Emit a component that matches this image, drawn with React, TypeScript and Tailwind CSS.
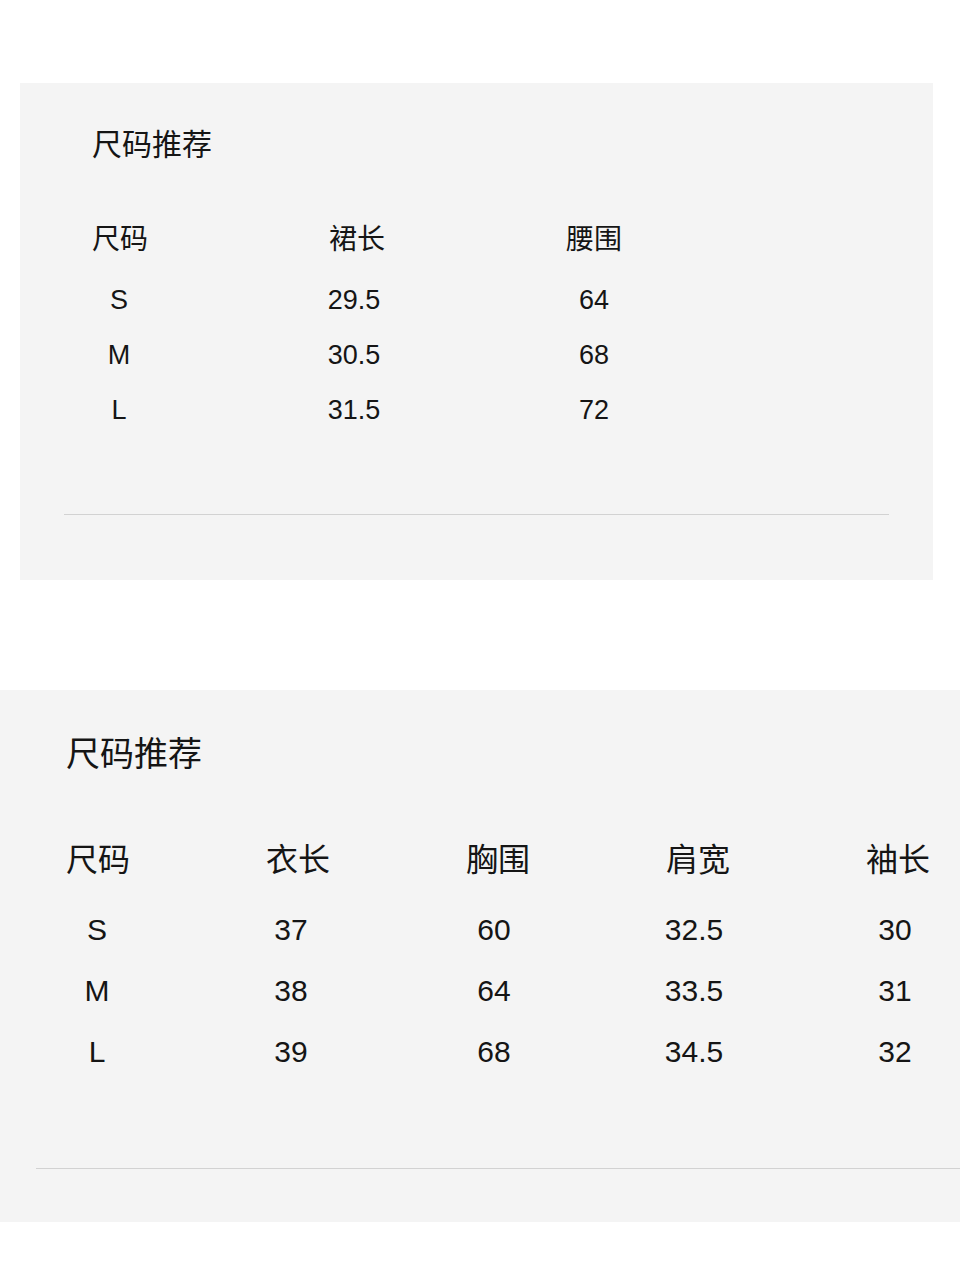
const font = { fontFamily: '"Liberation Sans", "Noto Sans CJK SC", sans-serif' };

const skirtRows = [
    ['S', '29.5', '64'],
    ['M', '30.5', '68'],
    ['L', '31.5', '72'],
];

const topRows = [
    ['S', '37', '60', '32.5', '30'],
    ['M', '38', '64', '33.5', '31'],
    ['L', '39', '68', '34.5', '32'],
];

// value cells sit a little off the header centres
const topValueGap = ['ml-0', 'ml-[74px]', 'ml-[83px]', 'ml-[80px]', 'ml-[81px]'];
const skirtValueGap = ['ml-0', 'ml-[75px]', 'ml-[80px]'];

const App = () => {
    return (
        <div className="bg-white w-[960px] h-[1280px] overflow-hidden text-[#151515]" style={font}>
            {/* skirt */}
            <div className="mt-[83px] ml-[20px] w-[913px] h-[497px] bg-[#f4f4f4] pt-[47px]">
                <div className="pl-[72px] text-[30px] leading-[30px]">尺码推荐</div>
                <div className="mt-[66px] pl-[20px] grid grid-cols-[160px_160px_160px] gap-x-[77px] text-[28px] leading-[28px]">
                    <div className="text-center">尺码</div>
                    <div className="text-center">裙长</div>
                    <div className="text-center">腰围</div>
                </div>
                <div className="mt-[18px] pl-[19px]">
                    {skirtRows.map((r) => (
                        <div key={r[0]} className="flex h-[55px] items-center text-[27px] leading-[28px]">
                            {r.map((v, i) => (
                                <div key={i} className={`w-[160px] text-center ${skirtValueGap[i]}`}>{v}</div>
                            ))}
                        </div>
                    ))}
                </div>
                <div className="mt-[77px] ml-[44px] w-[825px] h-px bg-[#d2d2d2]" />
            </div>

            {/* top */}
            <div className="mt-[110px] w-[960px] h-[532px] bg-[#f4f4f4] pt-[47px] overflow-hidden">
                <div className="pl-[66px] text-[34px] leading-[34px]">尺码推荐</div>
                <div className="mt-[73px] pl-[38px] grid grid-cols-[120px_120px_120px_120px_120px] gap-x-[80px] text-[32px] leading-[32px]">
                    <div className="text-center">尺码</div>
                    <div className="text-center">衣长</div>
                    <div className="text-center">胸围</div>
                    <div className="text-center">肩宽</div>
                    <div className="text-center">袖长</div>
                </div>
                <div className="mt-[23px] pl-[37px]">
                    {topRows.map((r) => (
                        <div key={r[0]} className="flex h-[61px] items-center text-[30px] leading-[30px]">
                            {r.map((v, i) => (
                                <div key={i} className={`w-[120px] shrink-0 text-center ${topValueGap[i]}`}>{v}</div>
                            ))}
                        </div>
                    ))}
                </div>
                <div className="mt-[86px] ml-[36px] w-[924px] h-px bg-[#d2d2d2]" />
            </div>
        </div>
    );
}

export default App;
